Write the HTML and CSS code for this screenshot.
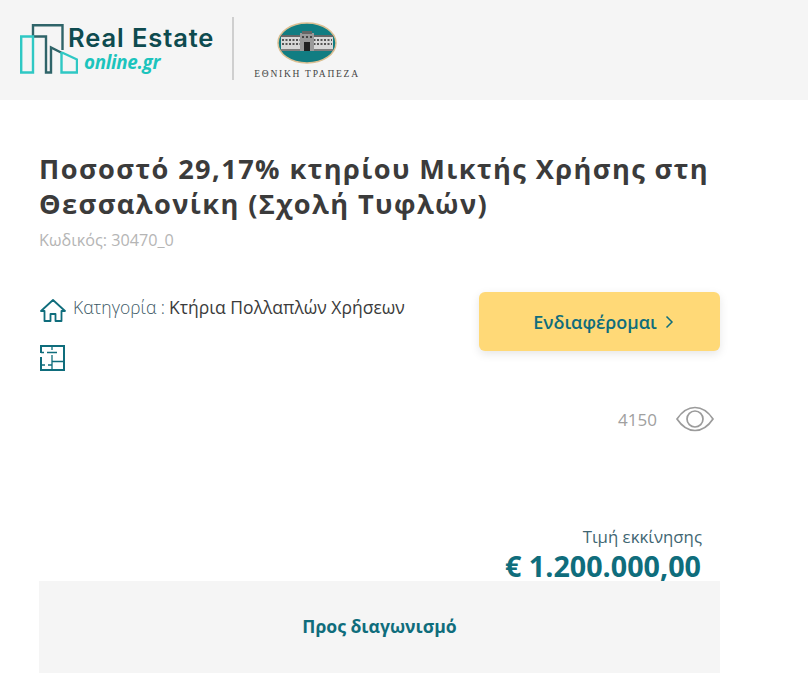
FILE: index.html
```html
<!DOCTYPE html>
<html lang="el">
<head>
<meta charset="utf-8">
<title>Real Estate Online</title>
<link rel="stylesheet" href="styles.css">
</head>
<body>
<header class="topbar">
  <div class="logo-re">
    <svg class="logo-mark" width="58" height="50" viewBox="0 0 58 50" fill="none">
      <path d="M13 12V1.200H42.500V26" stroke="#2f6469" stroke-width="2.400"/>
      <path d="M13 12.500H26V48.500H31V23.500L42 29" stroke="#2f6469" stroke-width="2.400"/>
      <path d="M1.200 12.500H13V48.500H1.200Z" stroke="#2fc8c4" stroke-width="2.400"/>
      <path d="M42 28.500L57 35.500V48.500H41.500V28" stroke="#2fc8c4" stroke-width="2.400"/>
    </svg>
    <div class="logo-text">
      <div class="logo-title">Real Estate</div>
      <div class="logo-sub">online.gr</div>
    </div>
  </div>
  <div class="logo-divider"></div>
  <div class="logo-bank">
    <svg width="60" height="42" viewBox="0 0 60 42">
      <ellipse cx="30" cy="21" rx="29" ry="20" fill="#117d82" stroke="#dcbf92" stroke-width="1.500"/>
      <rect x="4" y="14" width="52" height="15" fill="#d8d8d8"/>
      <rect x="4" y="13" width="52" height="2" fill="#666"/>
      <path d="M5 18H55M5 22H55" stroke="#555" stroke-width="2" stroke-dasharray="2 1.500"/>
      <rect x="4" y="27" width="52" height="2" fill="#7c7c7c"/>
      <rect x="23" y="11" width="14" height="18" fill="#9a9a9a"/>
      <rect x="25" y="9" width="10" height="3" fill="#666"/>
      <path d="M25 15H35" stroke="#444" stroke-width="2" stroke-dasharray="2 2"/>
      <rect x="27" y="20" width="6" height="9" fill="#222"/>
    </svg>
    <div class="bank-name">ΕΘΝΙΚΗ ΤΡΑΠΕΖΑ</div>
  </div>
</header>
<main class="content">
  <h1 class="title">Ποσοστό 29,17% κτηρίου Μικτής Χρήσης στη Θεσσαλονίκη (Σχολή Τυφλών)</h1>
  <div class="code">Κωδικός: 30470_0</div>
  <div class="details">
    <div class="facts">
      <div class="fact">
        <svg class="icon-home" width="26" height="24" viewBox="0 0 26 24" fill="none" stroke="#0f6d7c" stroke-width="1.800" stroke-linejoin="round">
          <path d="M1 13L13 2L25 13H21.500V23H15.500V16H10.500V23H4.500V13Z"/>
        </svg>
        <span class="fact-label">Κατηγορία :</span>
        <span class="fact-value">Κτήρια Πολλαπλών Χρήσεων</span>
      </div>
      <svg class="icon-plan" width="25" height="26" viewBox="0 0 25 26" fill="none" stroke="#0f6d7c">
        <path d="M1 8V1H24V25H1V12" stroke-width="2"/>
        <path d="M1 7.500H4M7 7.500H17M12 1V5M12 10V25M12 16.500H24M1 20H5M8 20H12" stroke-width="1.300"/>
      </svg>
    </div>
    <div class="actions">
      <button class="cta" type="button">Ενδιαφέρομαι
        <svg width="9" height="14" viewBox="0 0 9 14" fill="none" stroke="#0f6d7c" stroke-width="1.500"><path d="M1.500 1.500L7 7L1.500 12.500"/></svg>
      </button>
      <div class="views">
        <span class="views-count">4150</span>
        <svg width="38" height="26" viewBox="0 0 38 26" fill="none" stroke="#9b9b9b" stroke-width="1.700">
          <path d="M1 13C6 5.500 12 1.500 19 1.500S32 5.500 37 13C32 20.500 26 24.500 19 24.500S6 20.500 1 13Z"/>
          <circle cx="19" cy="13" r="8"/>
        </svg>
      </div>
    </div>
  </div>
  <div class="price">
    <div class="price-label">Τιμή εκκίνησης</div>
    <div class="price-value">€ 1.200.000,00</div>
  </div>
  <div class="status">Προς διαγωνισμό</div>
</main>
</body>
</html>
```
FILE: styles.css
```css
* { box-sizing: border-box; }
html, body { margin: 0; padding: 0; }
body { background: #fff; font-family: "Open Sans", sans-serif; color: #3b3b3b; }
.topbar { height: 100px; background: #f5f5f5; display: flex; align-items: center; padding: 0 0 4px 20px; }
.logo-re { display: flex; align-items: flex-start; width: 194px; }
.logo-mark { display: block; flex: none; margin-top: 1px; }
.logo-text { margin-left: -10px; }
.logo-title { font-family: "Inter", sans-serif; font-weight: 600; font-size: 25.500px; line-height: 29px; color: #0e4b4f; letter-spacing: 0.900px; white-space: nowrap; }
.logo-sub { font-family: "Open Sans", sans-serif; font-style: italic; font-weight: 700; font-size: 18.800px; line-height: 21px; color: #1cc4bd; margin-left: 16px; letter-spacing: -0.300px; }
.logo-divider { width: 2px; height: 63px; background: #cfcfcf; margin-left: 18px; }
.logo-bank { display: flex; flex-direction: column; align-items: center; margin-left: 21px; width: 104px; padding-top: 5px; }
.bank-name { font-family: "Liberation Serif", serif; font-size: 9.500px; line-height: 12px; letter-spacing: 1.750px; color: #444; margin-top: 4px; white-space: nowrap; }
.content { width: 681px; margin-left: 39px; }
.title { margin: 51px 0 0; font-size: 27.200px; line-height: 35px; font-weight: 700; letter-spacing: 1.400px; color: #3b3b3b; }
.code { font-size: 16.200px; line-height: 22px; color: #b5b5b5; margin-top: 8px; }
.details { display: flex; justify-content: space-between; margin-top: 41px; }
.facts { padding-top: 3px; }
.fact { display: flex; align-items: center; height: 24px; font-size: 17.500px; }
.icon-home { flex: none; margin: 5px 7px 0 1px; }
.fact-label { font-weight: 300; color: #3d5a66; margin-right: 4px; }
.fact-value { color: #3b3b3b; }
.icon-plan { display: block; margin: 26px 0 0 1px; }
.actions { width: 241px; }
.cta { display: flex; align-items: center; justify-content: center; gap: 8px; width: 241px; height: 59px; border: 0; border-radius: 6px; background: #ffd977; color: #0f6d7c; font: 600 18px "Open Sans", sans-serif; box-shadow: 0 3px 10px rgba(0,0,0,0.1); padding: 0 0 0 8px; }
.views { display: flex; justify-content: flex-end; align-items: center; gap: 19px; margin-top: 55px; padding-right: 6px; }
.views-count { font-size: 17px; color: #a0a0a0; }
.price { text-align: right; padding-right: 19px; margin-top: 93px; }
.price-label { font-size: 16.800px; line-height: 24px; font-weight: 400; color: #3f6672; margin-right: -1px; }
.price-value { font-size: 28.700px; line-height: 34px; height: 32px; font-weight: 700; color: #0f6d7c; }
.status { height: 92px; background: #f5f5f5; display: flex; align-items: center; justify-content: center; font-size: 17.600px; font-weight: 700; color: #0f6d7c; padding-bottom: 2px; }
```
